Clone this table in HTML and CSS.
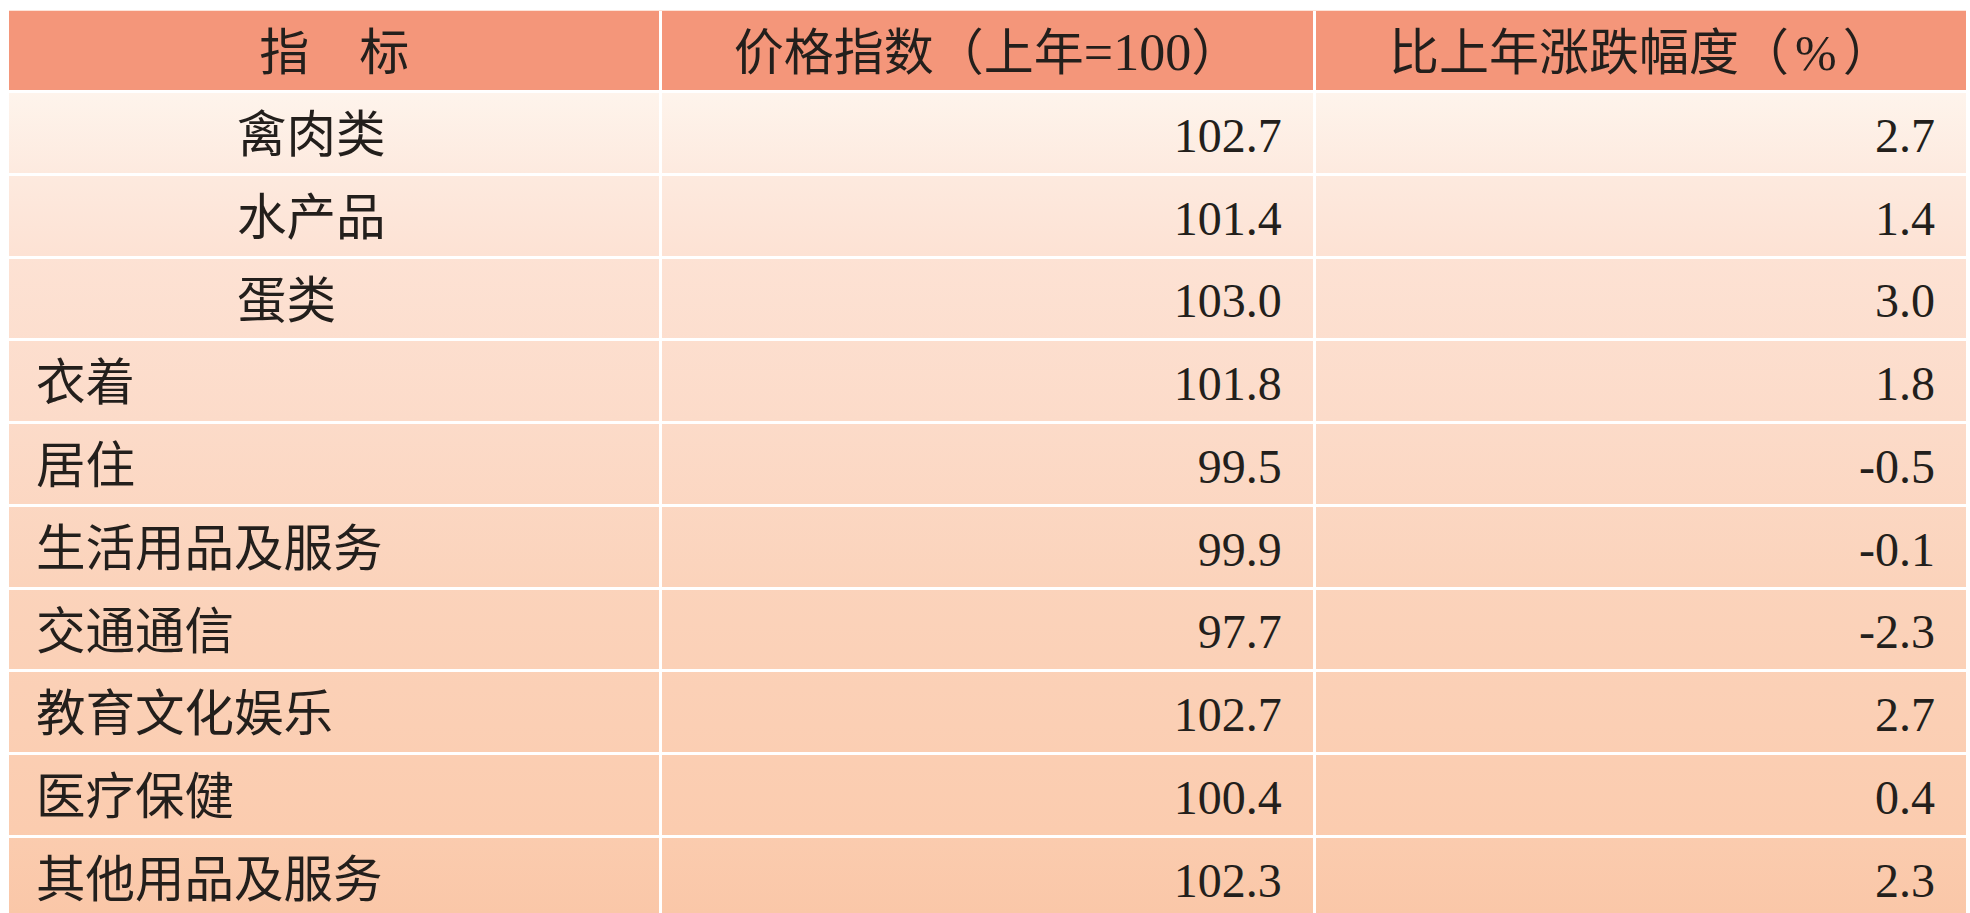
FILE: index.html
```html
<!DOCTYPE html>
<html lang="zh-CN">
<head>
<meta charset="utf-8">
<title>价格指数</title>
<link rel="stylesheet" href="styles.css">
</head>
<body>
<div class="table">
  <div class="cell head">指&emsp;标</div>
  <div class="cell head">价格指数（上年<span class="latin">=100</span>）</div>
  <div class="cell head">比上年涨跌幅度（<span class="pct">%</span>）</div>

  <div class="cell label sub">禽肉类</div><div class="cell num">102.7</div><div class="cell num">2.7</div>
  <div class="cell label sub">水产品</div><div class="cell num">101.4</div><div class="cell num">1.4</div>
  <div class="cell label sub">蛋类</div><div class="cell num">103.0</div><div class="cell num">3.0</div>
  <div class="cell label">衣着</div><div class="cell num">101.8</div><div class="cell num">1.8</div>
  <div class="cell label">居住</div><div class="cell num">99.5</div><div class="cell num">-0.5</div>
  <div class="cell label">生活用品及服务</div><div class="cell num">99.9</div><div class="cell num">-0.1</div>
  <div class="cell label">交通通信</div><div class="cell num">97.7</div><div class="cell num">-2.3</div>
  <div class="cell label">教育文化娱乐</div><div class="cell num">102.7</div><div class="cell num">2.7</div>
  <div class="cell label">医疗保健</div><div class="cell num">100.4</div><div class="cell num">0.4</div>
  <div class="cell label">其他用品及服务</div><div class="cell num">102.3</div><div class="cell num">2.3</div>
</div>
</body>
</html>
```

FILE: styles.css
```css
html, body {
  margin: 0;
  padding: 0;
  background: #ffffff;
  overflow: hidden;
}

body {
  height: 913px;
  font-family: "Liberation Serif", "Noto Sans CJK SC", serif;
  color: #231f1c;
}

.table {
  display: grid;
  grid-template-columns: repeat(3, 1fr);
  grid-template-rows: 79px;
  grid-auto-rows: 79.75px;
  gap: 3px;
  width: 1957px;
  margin: 10px 0 0 9px;
  border-top: 1px solid #fde3d8;
  background: #ffffff;
}

.cell {
  display: flex;
  align-items: center;
  font-size: 48px;
  line-height: 1;
  white-space: pre;
  background: linear-gradient(to bottom,
    #fef4ec 92px,
    #fdeadf 172px,
    #fde2d4 255px,
    #fcdbc9 420px,
    #fbd3bb 585px,
    #fbccaf 830px,
    #fac7a8 913px) fixed;
}

.head {
  justify-content: center;
  background: #f4967a;
  font-size: 50px;
  padding-top: 4px;
}

.head .latin {
  font-size: 52px;
}

.head .pct {
  padding: 0 6px;
}

.label {
  font-size: 49.5px;
  padding-left: 27px;
  padding-top: 6px;
}

.label.sub {
  padding-left: 228px;
}

.num {
  justify-content: flex-end;
  padding-right: 31px;
  padding-top: 6px;
}
```
